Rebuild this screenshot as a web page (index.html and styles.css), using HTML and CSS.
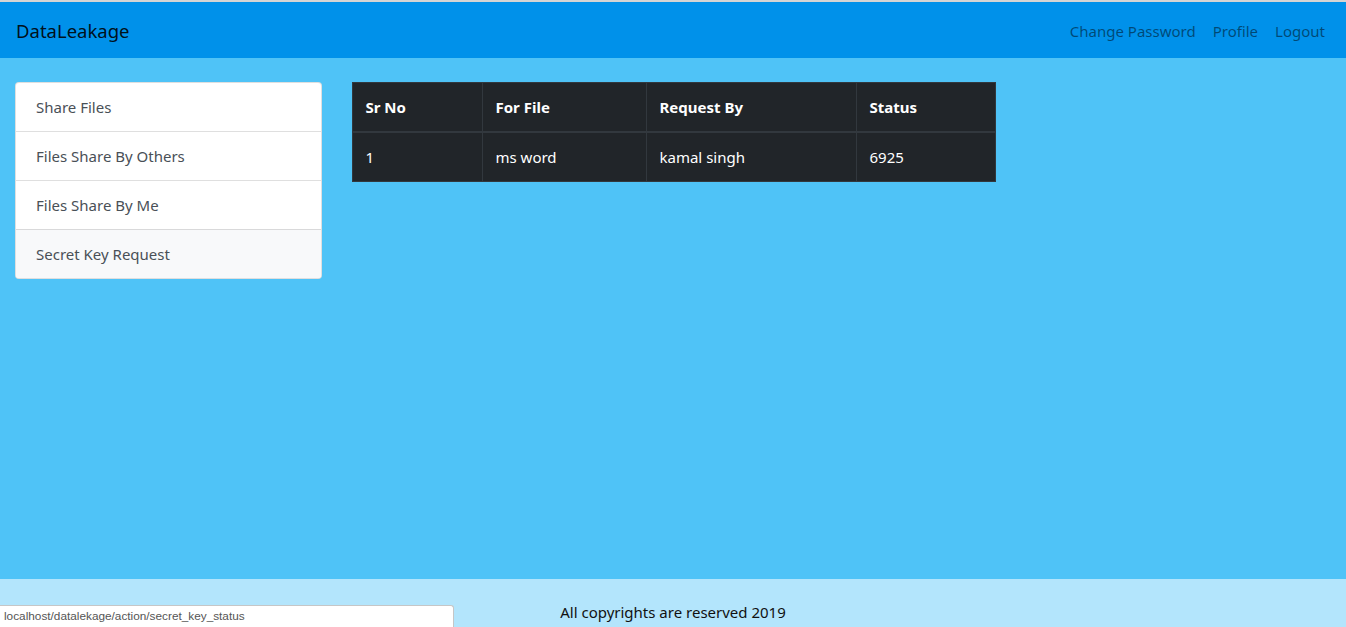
FILE: index.html
```html
<!DOCTYPE html>
<html lang="en">
<head>
<meta charset="utf-8">
<title>DataLeakage</title>
<link rel="stylesheet" href="styles.css">
</head>
<body>
<div class="page">
  <nav class="navbar">
    <a class="brand" href="#">DataLeakage</a>
    <ul class="nav-links">
      <li><a href="#">Change Password</a></li>
      <li><a href="#">Profile</a></li>
      <li><a href="#">Logout</a></li>
    </ul>
  </nav>
  <main class="main">
    <div class="row">
      <div class="col-side">
        <div class="list-group">
          <a class="list-item" href="#">Share Files</a>
          <a class="list-item" href="#">Files Share By Others</a>
          <a class="list-item" href="#">Files Share By Me</a>
          <a class="list-item active" href="#">Secret Key Request</a>
        </div>
      </div>
      <div class="col-main">
        <table class="table-dark">
          <colgroup>
            <col class="c1"><col class="c2"><col class="c3"><col class="c4">
          </colgroup>
          <thead>
            <tr><th>Sr No</th><th>For File</th><th>Request By</th><th>Status</th></tr>
          </thead>
          <tbody>
            <tr><td>1</td><td>ms word</td><td>kamal singh</td><td>6925</td></tr>
          </tbody>
        </table>
      </div>
    </div>
  </main>
  <footer class="footer">All copyrights are reserved 2019</footer>
</div>
<div class="status-bubble">localhost/datalekage/action/secret_key_status</div>
</body>
</html>
```
FILE: styles.css
```css
* { box-sizing: border-box; }
html, body { margin: 0; padding: 0; }
body {
  font-family: "Noto Sans", "Open Sans", sans-serif;
  font-size: 15px;
  line-height: 24px;
  color: #212529;
  background: #4fc3f7;
  border-top: 2px solid #d4d4d4;
  overflow: hidden;
}
a { text-decoration: none; }
.navbar {
  height: 56px;
  background: #0091ea;
  display: flex;
  align-items: center;
  justify-content: space-between;
  padding: 9px 16px 7px;
}
.brand {
  font-size: 18.5px;
  line-height: 30px;
  color: rgba(0,0,0,0.9);
}
.nav-links {
  list-style: none;
  margin: 0;
  padding: 0;
  display: flex;
}
.nav-links a {
  display: block;
  padding: 8px 8.5px;
  color: rgba(0,0,0,0.5);
}
.nav-links li:last-child a { padding-right: 5px; }
.main {
  height: 521px;
  padding: 24px 15px 0;
}
.row {
  display: flex;
  margin: 0 -15px;
}
.col-side {
  width: 25%;
  padding: 0 15px;
}
.col-main {
  width: 50%;
  padding: 0 15px;
}
.list-group {
  background: #fff;
  border: 1px solid rgba(0,0,0,0.125);
  border-radius: 4px;
  overflow: hidden;
}
.list-item {
  display: block;
  padding: 12px 20px;
  color: #495057;
  border-top: 1px solid rgba(0,0,0,0.125);
}
.list-item:first-child { border-top: 0; }
.list-item.active { background: #f8f9fa; }
.table-dark {
  width: 644px;
  border-collapse: collapse;
  background: #212529;
  color: #fff;
}
.c1 { width: 130px; }
.c2 { width: 164px; }
.c3 { width: 210px; }
.table-dark th, .table-dark td {
  text-align: left;
  padding: 12px 13px;
  border: 1px solid #32383e;
  vertical-align: top;
}
.table-dark th { font-weight: 700; border-bottom-width: 2px; }
.footer {
  background: #b3e5fc;
  text-align: center;
  padding: 21px 0 20px;
  color: #111;
}
.status-bubble {
  position: fixed;
  left: 0;
  bottom: 0;
  width: 454px;
  height: 22px;
  background: #fff;
  border: 1px solid #c6c6c6;
  border-left: 0;
  border-bottom: 0;
  border-top-right-radius: 3px;
  font-family: "Liberation Sans", sans-serif;
  font-size: 11.8px;
  line-height: 21px;
  padding-left: 4px;
  color: #555;
}
```
